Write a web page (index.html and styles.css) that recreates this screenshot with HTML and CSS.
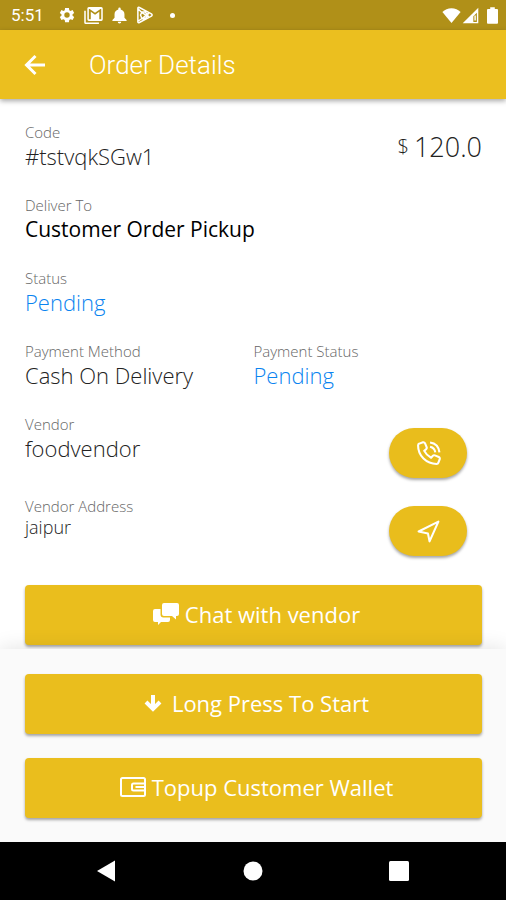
FILE: index.html
```html
<!DOCTYPE html>
<html lang="en">
	<head>
		<meta charset="utf-8">
		<meta name="viewport" content="width=device-width, initial-scale=1">
		<title>Order Details</title>
		<link rel="stylesheet" href="styles.css">
	</head>
	<body>
		<div class="status_bar">
			<span class="clock">5:51</span>
			<svg class="status_icon" viewBox="0 0 24 24"><path fill-rule="evenodd" d="M19.4 13a7.500 7.500 0 0 0 0-2l2.200-1.700-2.200-3.900-2.700 1.100-1.700-1L14.600 2.500H9.400L9 5.500l-1.700 1-2.700-1.100-2.200 3.900L4.600 11v2l-2.200 1.700 2.200 3.900 2.700-1.100 1.700 1 .4 3h5.200l.4-3 1.700-1 2.700 1.100 2.200-3.900zM12 15.600a3.600 3.600 0 1 1 0-7.200 3.600 3.600 0 0 1 0 7.200z"/></svg>
			<svg class="status_icon mail" viewBox="0 0 24 22"><path d="M0 5v15q0 2 2 2h17v-2H2V5z"/><path fill-rule="evenodd" d="M6 0h16q2 0 2 2v14q0 2-2 2H6q-2 0-2-2V2q0-2 2-2zm0 2.500V16h2.500V6l5.500 4 5.500-4v10H22V2.500h-1l-7 5-7-5z"/></svg>
			<svg class="status_icon bell" viewBox="0 0 24 24"><path d="M10.300 3.200a1.700 1.700 0 0 1 3.400 0v.9c3.300.8 5.300 3.300 5.300 6.700V16l3 3v1.500H2V19l3-3v-5.200c0-3.400 2-5.900 5.300-6.700zM9.500 21.500h5a2.500 2.500 0 0 1-5 0z"/></svg>
			<svg class="status_icon play" viewBox="0 0 24 24"><path d="M2.500 3Q2.500 1 4.500 2l16 8.500q2 1.500 0 3L4.500 22q-2 1-2-1zM3 4l5 5 9 5.500M3 20l6-4 8-6.500M8 8l-2 4 2 5 5-1 3-4-4-4z"/></svg>
			<span class="dot"></span>
			<svg class="status_icon wifi" viewBox="0 0 24 20"><path d="M12 20 .5 6.200C3.500 3.300 7.500 1.500 12 1.500s8.500 1.800 11.500 4.700z"/></svg>
			<svg class="status_icon signal" viewBox="0 0 24 24"><path fill-rule="evenodd" d="M23 1v22H1zm-2 7-5 5v8h5z"/><path d="M17.500 12h2v7h-2z"/></svg>
			<svg class="status_icon battery" viewBox="0 0 12 18"><path d="M3.500 0h5v2H11q1 0 1 1v14q0 1-1 1H1q-1 0-1-1V3q0-1 1-1h2.500z"/></svg>
		</div>
		<header class="app_bar">
			<button class="btn_back" type="button" aria-label="Back">
				<svg viewBox="0 0 24 24"><path d="M22 12H4M12.500 3 3.500 12l9 9"/></svg>
			</button>
			<h1>Order Details</h1>
		</header>
		<main class="order">
			<div class="row">
				<dl class="field">
					<dt>Code</dt>
					<dd>#tstvqkSGw1</dd>
				</dl>
				<p class="total"><span class="currency">$</span><span>120.0</span></p>
			</div>
			<dl class="field">
				<dt>Deliver To</dt>
				<dd class="strong">Customer Order Pickup</dd>
			</dl>
			<dl class="field">
				<dt>Status</dt>
				<dd class="pending">Pending</dd>
			</dl>
			<div class="columns">
				<dl class="field">
					<dt>Payment Method</dt>
					<dd>Cash On Delivery</dd>
				</dl>
				<dl class="field">
					<dt>Payment Status</dt>
					<dd class="pending">Pending</dd>
				</dl>
			</div>
			<div class="vendors">
				<div class="vendor">
					<dl class="field">
						<dt>Vendor</dt>
						<dd>foodvendor</dd>
					</dl>
					<button class="btn_round" type="button" aria-label="Call vendor">
						<svg viewBox="0 0 24 24"><path d="M3.200 2.500 6.700 1.200q1.300-.3 1.900.9l1.600 3.800q.4 1.200-.5 2L7.900 9.500q2.200 4.300 6.600 6.600l1.600-1.800q.8-.9 2-.5l3.800 1.600q1.200.6.900 1.900l-1.300 3.500q-.4 1.200-1.700 1.200Q12.500 22 7.200 16.800 2 11.500 2 4.200 2 2.900 3.200 2.500z"/><path d="M13.500 1.500q8 1 9 9.500M13.500 5.500q4.500 1 5 5.500"/></svg>
					</button>
				</div>
				<div class="vendor">
					<dl class="field">
						<dt>Vendor Address</dt>
						<dd class="address">jaipur</dd>
					</dl>
					<button class="btn_round" type="button" aria-label="Directions to vendor">
						<svg viewBox="0 0 24 24"><path d="M21.500 2.500 13 21.500 11.500 14 2.500 12z"/></svg>
					</button>
				</div>
			</div>
			<button class="btn_wide" type="button">
				<svg class="icon_chat" viewBox="0 0 26 22"><path d="M11 0h13q2 0 2 2v9q0 2-2 2h-1v3.500L19 13h-8q-2 0-2-2V2q0-2 2-2z"/><path d="M2 6h5.500v5.500q0 3 3 3H17V17q0 2-2 2H8l-3 3v-3H2q-2 0-2-2V8q0-2 2-2z"/></svg>
				Chat with vendor
			</button>
		</main>
		<footer class="actions">
			<button class="btn_wide" type="button">
				<svg class="icon_down" viewBox="0 0 22 20"><path d="M9 2v14M2 9l7 7 7-7"/></svg>
				Long Press To Start
			</button>
			<button class="btn_wide" type="button">
				<svg class="icon_wallet" viewBox="0 0 26 20"><rect x="1" y="1" width="24" height="18" rx="1.500"/><path d="M25 6.500H13.500q-1.500 0-1.500 1.500v4q0 1.500 1.500 1.500H25M15.500 10H24"/></svg>
				Topup Customer Wallet
			</button>
		</footer>
		<nav class="nav_bar">
			<button type="button" aria-label="Back"><svg viewBox="0 0 20 22"><path d="M18 .5v21L0 11z"/></svg></button>
			<button type="button" aria-label="Home"><svg viewBox="0 0 20 22"><circle cx="10" cy="11" r="9.500"/></svg></button>
			<button type="button" aria-label="Recent apps"><svg viewBox="0 0 20 22"><rect y="1" width="20" height="20" rx="1.500"/></svg></button>
		</nav>
	</body>
</html>
```
FILE: styles.css
```css
* {
    box-sizing: border-box;
}
body {
    display: flex;
    flex-direction: column;
    min-height: 100vh;
    margin: 0;
    background: #fff;
    color: #222;
    font-family: "Open Sans", "Noto Sans", sans-serif;
    font-weight: 300;
}
h1, p, dl, dd {
    margin: 0;
}
button {
    padding: 0;
    border: 0;
    color: #fff;
    font-family: inherit;
    cursor: pointer;
}
svg {
    display: block;
}

/* system status bar */
.status_bar {
    display: flex;
    align-items: center;
    height: 30px;
    padding: 0 8px 0 11px;
    background: #b09018;
    color: #fff;
}
.clock {
    margin-right: 14px;
    font-family: Roboto, sans-serif;
    font-size: 17px;
    font-weight: 400;
}
.status_icon {
    width: 18px;
    height: 18px;
    margin-right: 8px;
    fill: #fff;
}
.mail {
    width: 19px;
    height: 17px;
}
.bell {
    width: 17px;
}
.play {
    fill: none;
    stroke: #fff;
    stroke-width: 2;
}
.dot {
    width: 5px;
    height: 5px;
    margin: 0 auto 0 8px;
    border-radius: 50%;
    background: #fff;
}
.wifi {
    width: 19px;
    height: 16px;
    margin-right: 1px;
}
.signal {
    width: 17px;
    height: 17px;
}
.battery {
    width: 11px;
    height: 17px;
    margin-right: 0;
}

.app_bar {
    display: flex;
    align-items: center;
    gap: 42px;
    height: 69px;
    padding: 0 23px;
    background: #ebbf1f;
    box-shadow: 0 2px 5px rgba(0,0,0,.35);
    color: #fff;
}
.app_bar h1 {
    font-family: Roboto, sans-serif;
    font-size: 26px;
    font-weight: 300;
}
.btn_back {
    background: none;
}
.btn_back svg {
    width: 24px;
    height: 24px;
    fill: none;
    stroke: #fff;
    stroke-width: 3;
}

/* order fields */
.order {
    display: flex;
    flex: 1;
    flex-direction: column;
    gap: 25px;
    padding: 23px 24px 4px 25px;
}
.row {
    display: flex;
    align-items: center;
    justify-content: space-between;
}
.columns {
    display: grid;
    grid-template-columns: 1fr 1fr;
}
.field dt {
    color: #666;
    font-size: 15px;
    line-height: 20px;
}
.field dd {
    font-size: 22px;
    line-height: 28px;
}
.field .strong {
    color: #000;
    font-size: 21px;
    font-weight: 400;
}
.field .pending {
    color: #0a84f0;
}
.field .address {
    font-size: 18px;
    line-height: 22px;
}
.total {
    display: flex;
    align-items: center;
    gap: 5px;
    font-size: 27px;
}
.currency {
    font-size: 20px;
}

/* vendor rows with the round buttons */
.vendors {
    display: flex;
    flex-direction: column;
    gap: 18px;
    margin-bottom: 4px;
}
.vendor {
    display: flex;
    align-items: flex-end;
    justify-content: space-between;
    min-height: 60px;
    padding-right: 15px;
}
.vendor:first-child {
    min-height: 64px;
}
.vendor .field {
    align-self: flex-start;
}
.btn_round {
    display: flex;
    align-items: center;
    justify-content: center;
    width: 78px;
    height: 50px;
    border-radius: 25px;
    background: #e9bd1c;
    box-shadow: 0 2px 3px rgba(0,0,0,.35);
}
.btn_round svg {
    width: 25px;
    height: 25px;
    fill: none;
    stroke: #fff;
    stroke-width: 2;
    stroke-linejoin: round;
}

.btn_wide {
    display: flex;
    align-items: center;
    justify-content: center;
    gap: 6px;
    width: 100%;
    height: 60px;
    padding: 0 0 2px 6px;
    border-radius: 4px;
    background: #eabe1d;
    box-shadow: 0 2px 3px rgba(0,0,0,.35);
    font-size: 22px;
    font-weight: 500;
}
.btn_wide svg {
    fill: #fff;
}
.icon_chat {
    width: 26px;
    height: 22px;
}
.btn_wide .icon_down {
    width: 22px;
    height: 20px;
    fill: none;
    stroke: #fff;
    stroke-width: 4;
}
.btn_wide .icon_wallet {
    width: 26px;
    height: 20px;
    fill: none;
    stroke: #fff;
    stroke-width: 2;
}

/* bottom sheet, its shadow falls over the last button above */
.actions {
    position: relative;
    display: flex;
    flex-direction: column;
    gap: 24px;
    padding: 25px 24px 24px 25px;
    background: #fafafa;
    box-shadow: 0 0 20px rgba(0,0,0,.12);
}

.nav_bar {
    position: relative;
    display: flex;
    align-items: center;
    justify-content: space-around;
    height: 58px;
    padding: 0 34px;
    background: #000;
}
.nav_bar button {
    background: none;
}
.nav_bar svg {
    width: 20px;
    height: 22px;
    fill: #fff;
}
```
